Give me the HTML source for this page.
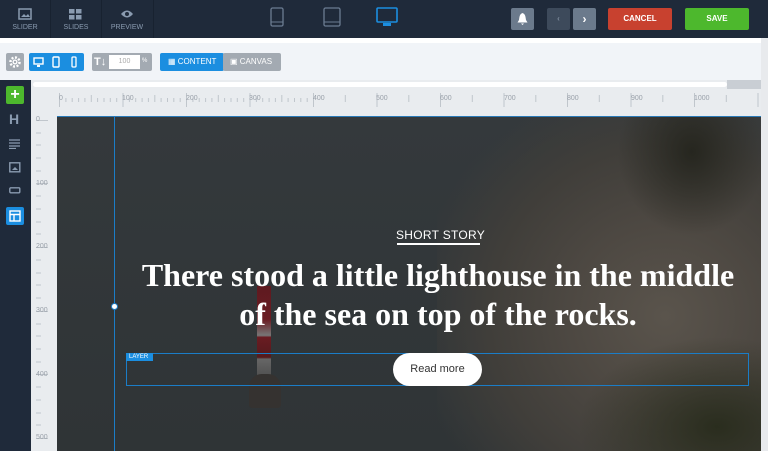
<!DOCTYPE html>
<html><head><meta charset="utf-8"><style>
*{margin:0;padding:0;box-sizing:border-box}
html,body{width:768px;height:451px;overflow:hidden}
body{background:#e9ecef;font-family:"Liberation Sans",sans-serif;position:relative}
.a{position:absolute}
.top{left:0;top:0;width:768px;height:38px;background:#1f2a3a}
.tl{color:#8a9bb0;font-size:7px;text-align:center;top:24px;width:50px}
.btn{border-radius:2px;color:#fff;font-size:8px;font-weight:bold;text-align:center;line-height:22px}
.tb{top:53px;height:18px;border-radius:2px}
.rh{font-size:7px;color:#9aa1aa;top:95px}
.rv{font-size:7px;color:#9aa1aa;left:36px}
</style></head><body>
<div class="a top"></div>
<div class="a" style="left:50px;top:0;width:1px;height:38px;background:#182230"></div>
<div class="a" style="left:101px;top:0;width:1px;height:38px;background:#182230"></div>
<div class="a" style="left:153px;top:0;width:1px;height:38px;background:#182230"></div>
<svg class="a" style="left:18px;top:8px" width="14" height="12"><rect x="1" y="1" width="12" height="10" fill="none" stroke="#8a9bb0" stroke-width="1.5"/><path d="M3 9l3-3 2 2 2-2 2 3z" fill="#8a9bb0"/></svg>
<svg class="a" style="left:69px;top:9px" width="13" height="11"><rect x="0" y="0" width="5.5" height="4.5" fill="#8a9bb0"/><rect x="7" y="0" width="5.5" height="4.5" fill="#8a9bb0"/><rect x="0" y="6" width="5.5" height="4.5" fill="#8a9bb0"/><rect x="7" y="6" width="5.5" height="4.5" fill="#8a9bb0"/></svg>
<svg class="a" style="left:120px;top:9px" width="14" height="10"><path d="M1 5Q7-2 13 5Q7 12 1 5z" fill="#8a9bb0"/><circle cx="7" cy="5" r="2" fill="#1f2a3a"/></svg>
<div class="a tl" style="left:0">SLIDER</div><div class="a tl" style="left:51px">SLIDES</div><div class="a tl" style="left:102px">PREVIEW</div>
<svg class="a" style="left:270px;top:7px" width="14" height="20"><rect x="1" y="1" width="12" height="18" rx="1.5" fill="none" stroke="#6b7c92" stroke-width="1.3"/><line x1="1" y1="15" x2="13" y2="15" stroke="#6b7c92"/></svg>
<svg class="a" style="left:323px;top:7px" width="18" height="20"><rect x="1" y="1" width="16" height="18" rx="1.5" fill="none" stroke="#6b7c92" stroke-width="1.3"/><line x1="1" y1="15" x2="17" y2="15" stroke="#6b7c92"/></svg>
<svg class="a" style="left:376px;top:7px" width="22" height="20"><rect x="1" y="1" width="20" height="14" rx="1" fill="none" stroke="#1b8ee0" stroke-width="1.6"/><rect x="7" y="16" width="8" height="3" fill="#1b8ee0"/></svg>
<div class="a btn" style="left:511px;top:8px;width:23px;height:22px;background:#6b7a8c"><svg width="11" height="12" style="margin-top:5px"><path d="M5.5 0C2.5 1 2.5 4 2 7L0.5 9.5h10L9 7C8.5 4 8.5 1 5.5 0zM4 10.5h3L5.5 12z" fill="#fff"/></svg></div>
<div class="a btn" style="left:547px;top:8px;width:23px;height:22px;background:#3d4a5b;color:#7c8a9b">&lsaquo;</div>
<div class="a btn" style="left:573px;top:8px;width:23px;height:22px;background:#6b7a8c;font-size:12px">&rsaquo;</div>
<div class="a btn" style="left:608px;top:8px;width:64px;height:22px;background:#c8412f">CANCEL</div>
<div class="a btn" style="left:685px;top:8px;width:64px;height:22px;background:#4db82d">SAVE</div>
<div class="a" style="left:0;top:38px;width:761px;height:5px;background:#fff"></div>
<div class="a" style="left:0;top:43px;width:761px;height:37px;background:#f1f4f8"></div>
<div class="a" style="left:761px;top:38px;width:7px;height:413px;background:#e8eaed"></div>
<div class="a tb" style="left:6px;width:18px;background:#a3aab2"><svg width="18" height="18"><circle cx="9" cy="9" r="4.5" fill="none" stroke="#fff" stroke-width="2.5" stroke-dasharray="2 1.5"/><circle cx="9" cy="9" r="2.5" fill="#fff"/><circle cx="9" cy="9" r="1.2" fill="#a3aab2"/></svg></div>
<div class="a tb" style="left:29px;width:55px;background:#1b8ee0"><svg width="55" height="18"><rect x="5" y="5" width="9" height="6" fill="none" stroke="#fff" stroke-width="1.4"/><rect x="8" y="12" width="3" height="2" fill="#fff"/><rect x="24" y="4" width="6" height="10" rx="1" fill="none" stroke="#fff" stroke-width="1.4"/><rect x="43" y="4" width="4" height="10" rx="1" fill="none" stroke="#fff" stroke-width="1.3"/></svg></div>
<div class="a tb" style="left:92px;width:60px;background:#a3aab2"></div>
<div class="a" style="left:94px;top:56px;font-size:11px;color:#fff;font-weight:bold">T&#8595;</div>
<div class="a" style="left:109px;top:55px;width:31px;height:14px;background:#fff;font-size:7px;color:#aaa;text-align:center;line-height:14px">100</div>
<div class="a" style="left:142px;top:58px;font-size:6px;color:#fff">%</div>
<div class="a tb" style="left:160px;width:64px;background:#1b8ee0;color:#fff;font-size:8px;line-height:18px;padding-left:8px">&#9638; CONTENT</div>
<div class="a tb" style="left:223px;width:58px;background:#a3aab2;color:#fff;font-size:8px;line-height:18px;padding-left:7px">&#9635; CANVAS</div>
<div class="a" style="left:31px;top:80px;width:730px;height:36px;background:#e9ecef"></div>
<div class="a" style="left:33px;top:82px;width:694px;height:5px;background:#fff;border-radius:3px"></div>
<div class="a" style="left:727px;top:80px;width:34px;height:9px;background:#c9ced4"></div>
<svg class="a" style="left:31px;top:88px" width="730" height="20"><g stroke="#c0c6cc" stroke-width="1">
<path d="M28.5 5v14M92 5v14M155.5 5v14M219 5v14M282.5 5v14M346 5v14M409.5 5v14M473 5v14M536.5 5v14M600 5v14M663.5 5v14M727 5v14"/>
<path d="M34.9 10v4M41.2 10v4M47.6 10v4M53.9 10v4M60.3 7v7M66.6 10v4M73 10v4M79.3 10v4M85.7 10v4M98.4 10v4M104.7 10v4M111.1 10v4M117.4 10v4M123.8 7v7M130.1 10v4M136.5 10v4M142.8 10v4M149.2 10v4M161.9 10v4M168.2 10v4M174.6 10v4M180.9 10v4M187.3 7v7M193.6 10v4M200 10v4M206.3 10v4M212.7 10v4M225.4 10v4M231.7 10v4M238.1 10v4M244.4 10v4M250.8 7v7M257.1 10v4M263.5 10v4M269.8 10v4M276.2 10v4M314.3 7v7M377.8 7v7M441.3 7v7M504.8 7v7M568.3 7v7M631.8 7v7M695.3 7v7"/></g></svg>
<div class="a rh" style="left:59px">0</div><div class="a rh" style="left:122px">100</div><div class="a rh" style="left:186px">200</div><div class="a rh" style="left:249px">300</div><div class="a rh" style="left:313px">400</div><div class="a rh" style="left:376px">500</div><div class="a rh" style="left:440px">600</div><div class="a rh" style="left:504px">700</div><div class="a rh" style="left:567px">800</div><div class="a rh" style="left:631px">900</div><div class="a rh" style="left:694px">1000</div>
<div class="a" style="left:0;top:80px;width:31px;height:371px;background:#1f2a3a"></div>
<div class="a" style="left:6px;top:86px;width:18px;height:18px;background:#4db82d;border-radius:2px;color:#fff;font-size:16px;line-height:17px;text-align:center;font-weight:bold">+</div>
<div class="a" style="left:9px;top:111px;color:#8a9bb0;font-size:14px;font-weight:bold">H</div>
<svg class="a" style="left:9px;top:139px" width="12" height="10"><path d="M0 1h11M0 4h11M0 7h11M0 9.5h7" stroke="#8a9bb0" stroke-width="1.2"/></svg>
<svg class="a" style="left:9px;top:162px" width="12" height="11"><rect x="0.8" y="0.8" width="10" height="9" fill="none" stroke="#8a9bb0" stroke-width="1.4"/><path d="M3 8l3-3 3 3z" fill="#8a9bb0"/></svg>
<svg class="a" style="left:9px;top:187px" width="12" height="7"><rect x="0.8" y="0.8" width="10" height="5" rx="1" fill="none" stroke="#8a9bb0" stroke-width="1.4"/></svg>
<div class="a" style="left:6px;top:207px;width:18px;height:18px;background:#1b8ee0;border-radius:2px"><svg width="18" height="18"><rect x="4" y="4" width="10" height="10" fill="none" stroke="#fff" stroke-width="1.4"/><path d="M4 7.5h10M8 7.5v6.5" stroke="#fff" stroke-width="1.4"/></svg></div>
<svg class="a" style="left:31px;top:116px" width="26" height="335"><g stroke="#c0c6cc"><path d="M5 4.5h12M5 67.5h12M5 131.5h12M5 195.5h12M5 258.5h12M5 322.5h12"/><path d="M5 17h5M5 29h5M5 42h5M5 55h5M5 80h5M5 93h5M5 106h5M5 118h5M5 144h5M5 157h5M5 169h5M5 182h5M5 208h5M5 220h5M5 233h5M5 246h5M5 271h5M5 284h5M5 297h5M5 309h5"/></g></svg>
<div class="a rv" style="top:116px">0</div><div class="a rv" style="top:180px">100</div><div class="a rv" style="top:243px">200</div><div class="a rv" style="top:307px">300</div><div class="a rv" style="top:371px">400</div><div class="a rv" style="top:434px">500</div>
<div class="a" style="left:57px;top:116px;width:704px;height:335px;overflow:hidden;background:linear-gradient(180deg,#34393c 0%,#2f3436 100%)">
<div class="a" style="left:380px;top:-20px;width:380px;height:400px;background:radial-gradient(ellipse at 60% 55%,#5a544c 0%,#4d4842 30%,#403e3a 55%,rgba(52,57,60,0) 78%)"></div>
<div class="a" style="left:560px;top:0;width:150px;height:120px;background:radial-gradient(ellipse at 50% 30%,#26261f 0%,rgba(40,40,32,0) 70%)"></div>
<div class="a" style="left:520px;top:220px;width:200px;height:130px;background:radial-gradient(ellipse at 70% 70%,#2a2d1e 0%,rgba(45,48,32,0) 70%)"></div>
<div class="a" style="left:200px;top:170px;width:14px;height:95px;background:linear-gradient(180deg,#5e1a20 0%,#6a1c22 35%,#777 52%,#6a1c22 54%,#551a1d 75%,#666 77%,#4a4a4a 100%)"></div>
<div class="a" style="left:192px;top:258px;width:32px;height:34px;background:#353230;border-radius:40% 40% 10% 10%"></div>
<div class="a" style="left:57px;top:0;width:1px;height:335px;background:#1b7dc7"></div>
</div>
<div class="a" style="left:57px;top:116px;width:704px;height:1px;background:#2a7ab8"></div>
<div class="a" style="left:111px;top:303px;width:7px;height:7px;border-radius:50%;background:#fff;border:1px solid #1b7dc7"></div>
<div class="a" style="left:396px;top:228px;color:#fff;font-size:12px;letter-spacing:0.3px">SHORT STORY</div>
<div class="a" style="left:397px;top:243px;width:83px;height:1.5px;background:#fff"></div>
<div class="a" style="left:110px;top:256px;width:656px;text-align:center;color:#fff;font-family:'Liberation Serif',serif;font-size:32px;font-weight:bold;line-height:39px">There stood a little lighthouse in the middle<br>of the sea on top of the rocks.</div>
<div class="a" style="left:126px;top:353px;width:623px;height:33px;border:1px solid #1b7dc7"></div>
<div class="a" style="left:126px;top:353px;width:27px;height:8px;background:#1b8ee0;color:#fff;font-size:6px;line-height:8px;padding-left:3px">LAYER</div>
<div class="a" style="left:393px;top:353px;width:89px;height:33px;background:#fff;border-radius:17px;color:#333;font-size:11px;line-height:33px;text-align:center">Read more</div>
</body></html>
